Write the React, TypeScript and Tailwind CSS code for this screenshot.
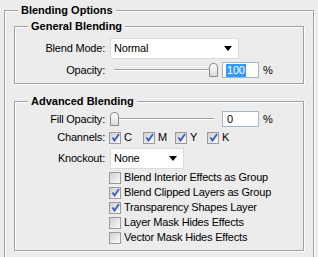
import React from 'react';

const etched = 'border border-[#a0a0a0] shadow-[1px_1px_0_#fff,inset_1px_1px_0_#fff]';

function Legend({ children }: { children: React.ReactNode }) {
  return <div className="-mt-[7px] ml-[13px] w-fit bg-[#ececec] px-[3px] text-[11px] font-bold leading-[13px] tracking-normal">{children}</div>;
}

function Arrow() {
  return (
    <svg width="8" height="5" viewBox="0 0 8 5">
      <polygon points="0,0 8,0 4,5" fill="#000" />
    </svg>
  );
}

function Select({ value, width }: { value: string; width: string }) {
  return (
    <div className={`ml-[5px] flex h-[21px] items-center justify-between border border-[#dadada] bg-white pl-[3px] pr-[6px] ${width}`}>
      <span>{value}</span>
      <Arrow />
    </div>
  );
}

function Slider({ at, value, selected }: { at: string; value: string; selected?: boolean }) {
  return (
    <>
      <div className="relative ml-[5px] h-[16px] w-[108px]">
        <div className="absolute left-[4px] top-[7px] h-[2px] w-[100px] border-t border-b border-t-[#a0a0a0] border-b-white" />
        <div className={`absolute top-[1px] h-[14px] w-[9px] rounded-t-[4px] border border-[#8a8a8a] bg-linear-to-b from-white to-[#dcdcdc] ${at}`} />
      </div>
      <div className="ml-[4px] flex h-[16px] w-[37px] items-center border border-[#9fb6cc] bg-white pl-[3px]">
        <span className={selected ? 'bg-[#3399ff] px-px text-white' : 'px-px'}>{value}</span>
      </div>
      <span className="ml-[4px]">%</span>
    </>
  );
}

function Check({ on }: { on?: boolean }) {
  return (
    <span className="flex h-[12px] w-[12px] shrink-0 items-center justify-center border border-[#9a9a9a] bg-linear-to-br from-[#cfcfcf] to-[#fbfbfb]">
      {on && (
        <svg width="9" height="9" viewBox="0 0 9 9">
          <path d="M1.5 4.5 L3.5 7.5 L8 1" fill="none" stroke="#3b5cb4" strokeWidth="1.8" />
        </svg>
      )}
    </span>
  );
}

function Row({ label, className = '', children }: { label: string; className?: string; children: React.ReactNode }) {
  return (
    <div className={`flex items-center ${className}`}>
      <span className="w-[90px] text-right">{label}</span>
      {children}
    </div>
  );
}

const options = [
  { label: 'Blend Interior Effects as Group', on: false },
  { label: 'Blend Clipped Layers as Group', on: true },
  { label: 'Transparency Shapes Layer', on: true },
  { label: 'Layer Mask Hides Effects', on: false },
  { label: 'Vector Mask Hides Effects', on: false },
];

export default function App() {
  return (
    <div className="h-[257px] w-[318px] overflow-hidden bg-[#ececec] pl-[4px] pt-[10px] font-['Liberation_Sans',Arial,sans-serif] text-[11px] leading-[13px] tracking-[-0.2px] text-black">
      <div className={`h-[260px] w-[310px] ${etched}`}>
        <Legend>Blending Options</Legend>

        <div className={`ml-[9px] mt-[9px] h-[58px] w-[290px] ${etched}`}>
          <Legend>General Blending</Legend>
          <Row label="Blend Mode:" className="mt-[5px] h-[21px]">
            <Select value="Normal" width="w-[129px]" />
          </Row>
          <Row label="Opacity:" className="mt-[3px] h-[16px]">
            <Slider at="left-[99px]" value="100" selected />
          </Row>
        </div>

        <div className={`ml-[9px] mt-[17px] h-[150px] w-[290px] ${etched}`}>
          <Legend>Advanced Blending</Legend>
          <Row label="Fill Opacity:" className="mt-[3px] h-[16px]">
            <Slider at="left-0" value="0" />
          </Row>
          <Row label="Channels:" className="mt-[3px] h-[15px]">
            <div className="ml-[4px] flex items-center">
              {['C', 'M', 'Y', 'K'].map((c, i) => (
                <label key={c} className={`flex items-center gap-[3px] ${i === 0 ? 'w-[34px]' : 'w-[32px]'}`}>
                  <Check on />
                  <span>{c}</span>
                </label>
              ))}
            </div>
          </Row>
          <Row label="Knockout:" className="mt-[3px] h-[21px]">
            <Select value="None" width="w-[74px]" />
          </Row>
          <div className="mt-[1px] flex flex-col pl-[94px]">
            {options.map((o) => (
              <label key={o.label} className="flex h-[15px] items-center gap-[3px]">
                <Check on={o.on} />
                <span>{o.label}</span>
              </label>
            ))}
          </div>
        </div>
      </div>
    </div>
  );
}
